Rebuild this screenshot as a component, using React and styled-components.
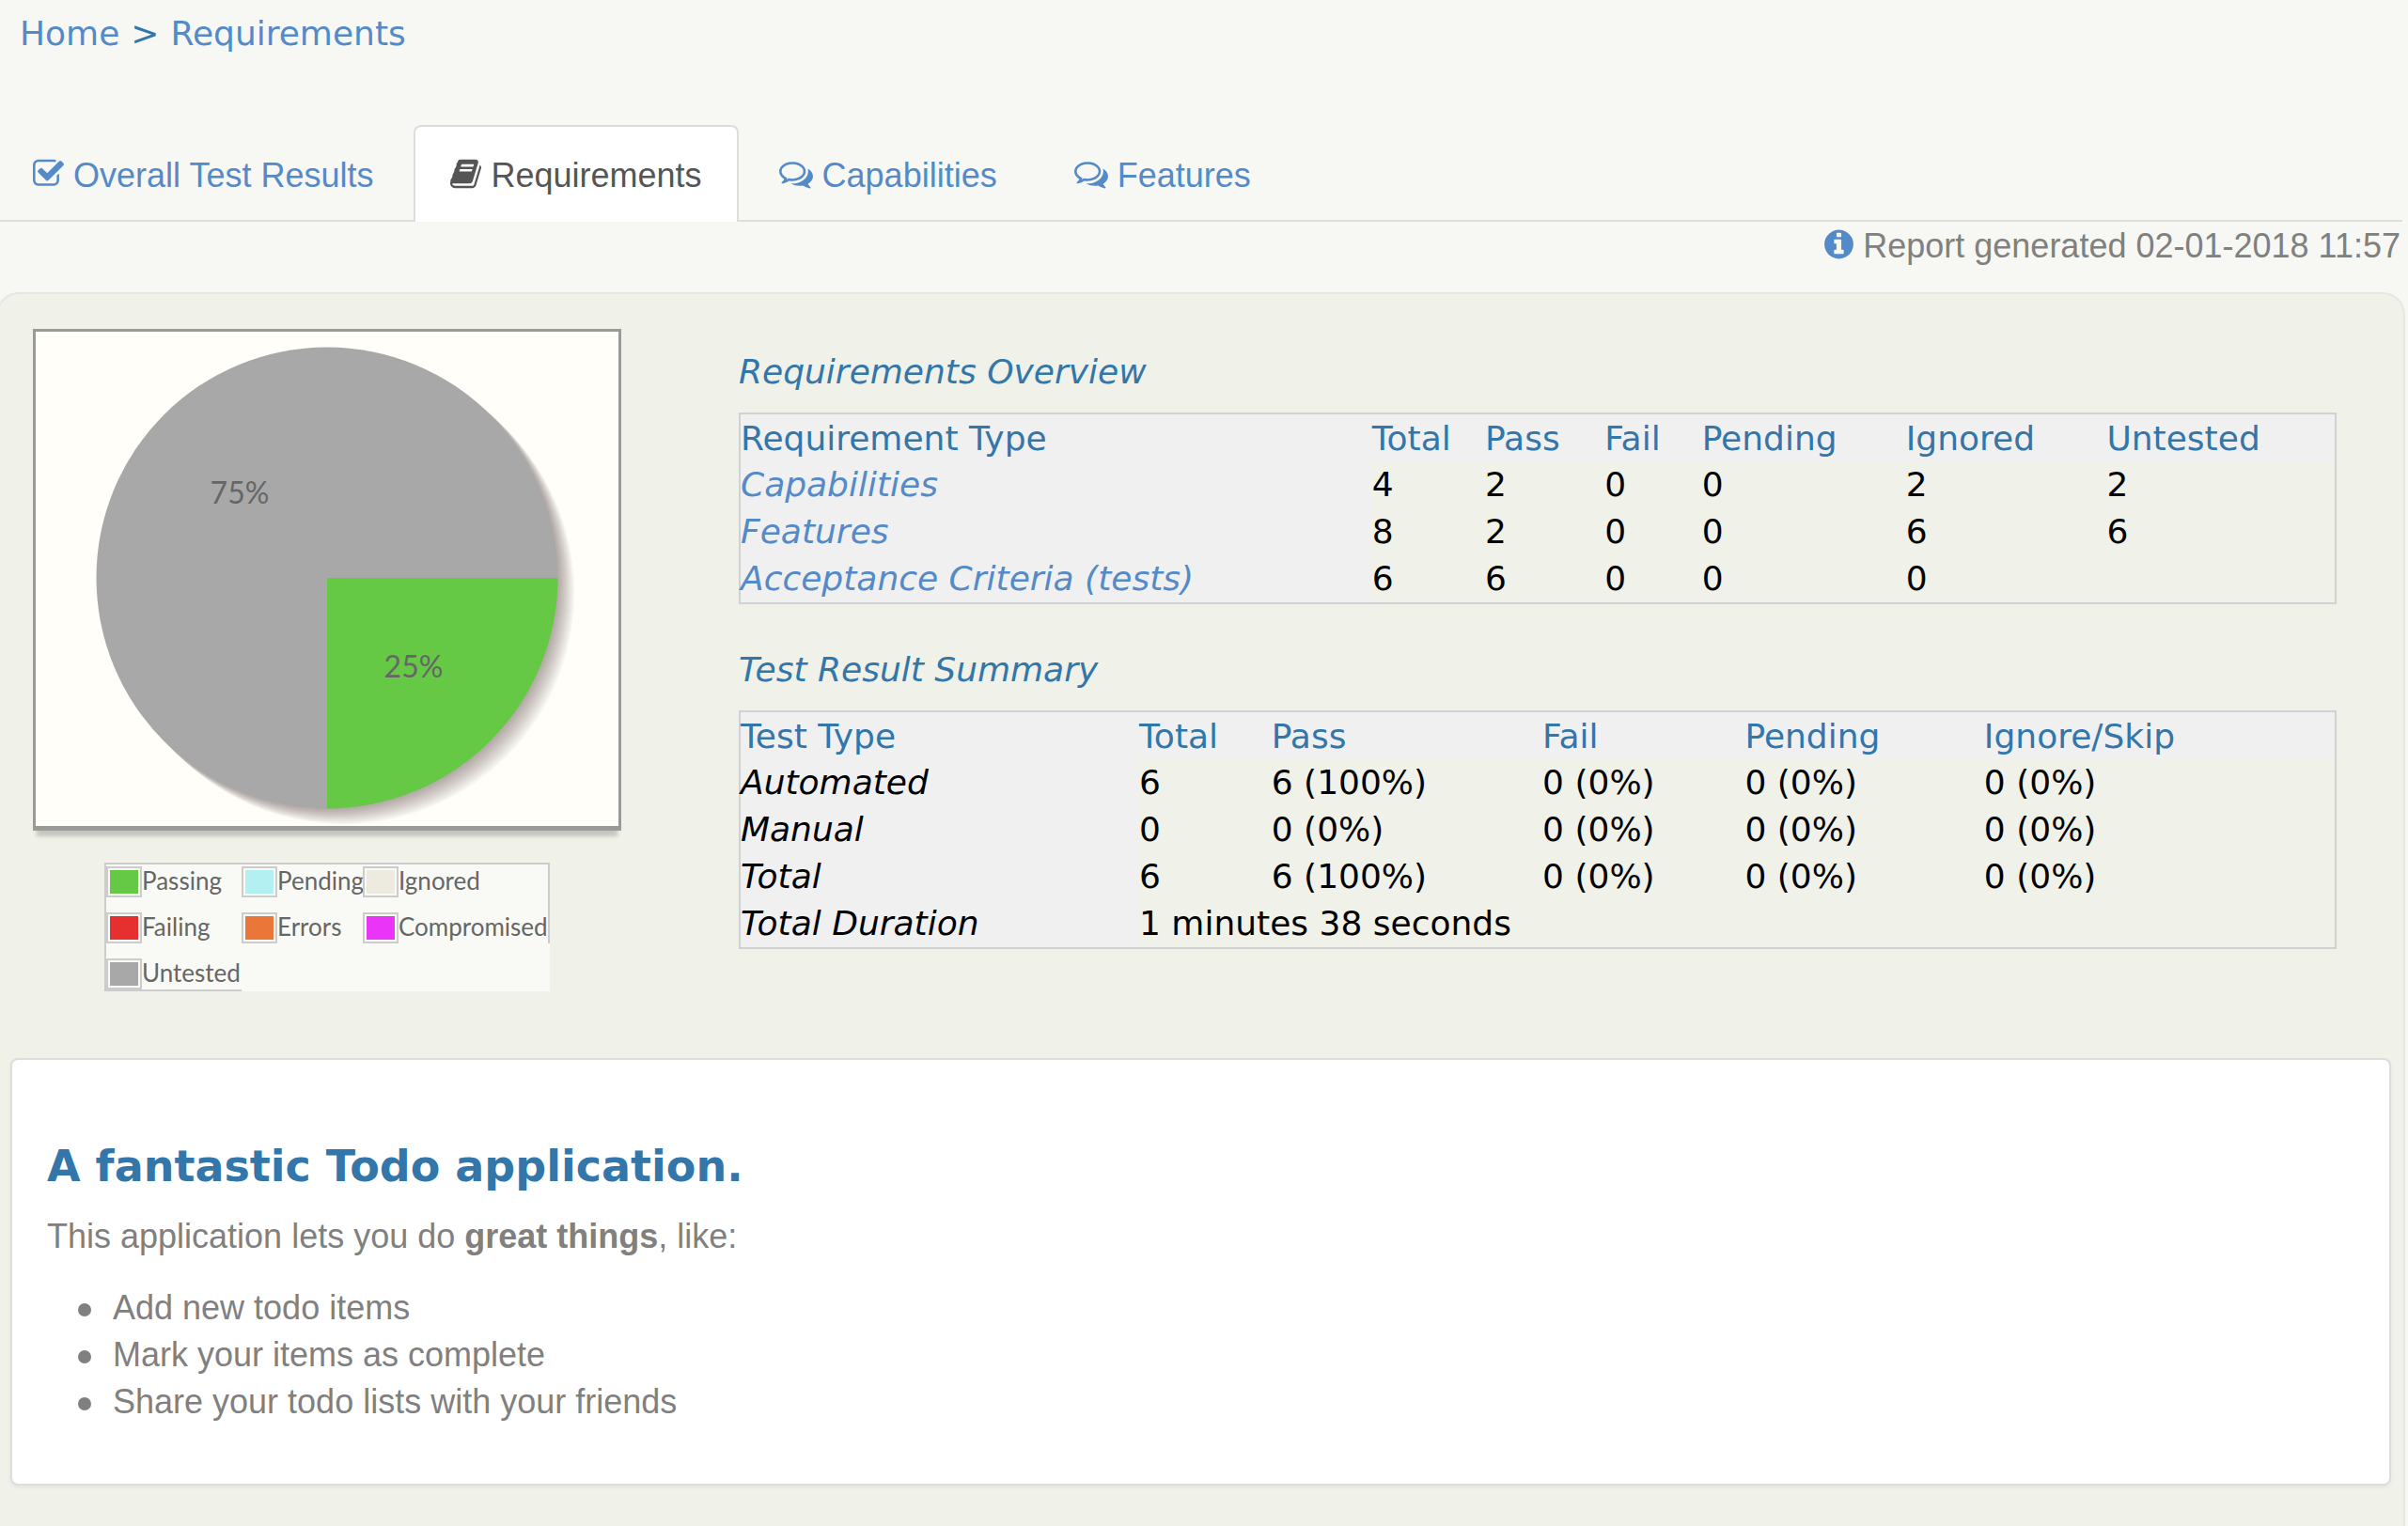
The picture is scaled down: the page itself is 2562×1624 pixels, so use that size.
import React from "react";
import styled, { createGlobalStyle } from "styled-components";

const sans = '"Liberation Sans", Arial, Helvetica, sans-serif';
const verdana = 'Verdana, "DejaVu Sans", sans-serif';
const trebuchet = '"Trebuchet MS", Lato, sans-serif';

const link = "#548ac8";
const heading = "#3276aa";

const GlobalStyle = createGlobalStyle`
  * { box-sizing: border-box; }
  body {
    margin: 0;
    background: #f7f8f3;
    color: #808080;
    font: 36px/51px ${sans};
  }
  a { color: ${link}; text-decoration: none; }
`;

const Page = styled.div`
  display: flex;
  flex-direction: column;
  min-height: 100vh;
  overflow: hidden;
`;

const Breadcrumbs = styled.nav`
  display: flex;
  gap: 12px;
  padding: 10px 21px 72px;
  font-family: ${verdana};
  color: ${heading};
`;

const TabList = styled.ul`
  display: flex;
  gap: 4px;
  margin: 0 6px 0 -4px;
  padding: 0;
  list-style: none;
  border-bottom: 2px solid #dcdddd;
`;

const Tab = styled.a`
  display: flex;
  gap: 10px;
  height: 103px;
  margin-bottom: -2px;
  padding: 26px 37px 24px;
  border: 2px solid ${(p) => (p.$active ? "#dcdddd" : "transparent")};
  border-bottom: 0;
  border-radius: 8px 8px 0 0;
  background: ${(p) => (p.$active ? "#fff" : "transparent")};
  color: ${(p) => (p.$active ? "#555" : link)};
`;

const Icon = styled.svg`
  flex: none;
  height: 36px;
  margin-top: 6px;
  fill: currentColor;
`;

const Generated = styled.div`
  display: flex;
  justify-content: flex-end;
  gap: 10px;
  padding: 0 8px 24px;

  svg { color: ${link}; }
`;

const Panel = styled.main`
  flex: 1;
  margin: 0 3px 0 -4px;
  padding: 0 13px 40px;
  border: 2px solid #e6e7e1;
  border-bottom: 0;
  border-radius: 24px 24px 0 0;
  background: #f0f1e8;
`;

const Summary = styled.section`
  display: flex;
  gap: 125px;
  padding: 37px 58px 71px 24px;
`;

const ChartColumn = styled.div`
  display: flex;
  flex: none;
  flex-direction: column;
  align-items: center;
  gap: 34px;
  width: 626px;
`;

const ChartFrame = styled.div`
  width: 100%;
  border: 3px solid #999b96;
  border-bottom-width: 5px;
  background: #fffef9;
  box-shadow: 0 10px 4px -4px rgba(0, 0, 0, 0.18);

  svg { display: block; width: 100%; }
  text {
    fill: #666;
    font: 32px ${trebuchet};
    text-anchor: middle;
  }
`;

const Legend = styled.ul`
  display: grid;
  grid-template-columns: 146px 129px 199px;
  margin: 0;
  padding: 0;
  list-style: none;
  background: #f9faf5;
  color: #666;
  font: 26px/31px ${trebuchet};
`;

const LegendItem = styled.li`
  display: flex;
  padding-top: ${(p) => (p.$top ? 2 : 16)}px;
  border: 0 solid #ccc;
  border-top-width: ${(p) => (p.$top ? 2 : 0)}px;
  border-left-width: ${(p) => (p.$left ? 2 : 0)}px;
  border-right-width: ${(p) => (p.$right ? 2 : 0)}px;
  border-bottom-width: ${(p) => (p.$bottom ? 2 : 0)}px;
`;

const Swatch = styled.span`
  flex: none;
  width: 38px;
  height: 33px;
  padding: 2px;
  border: 2px solid #ccc;
  background: ${(p) => p.$color} content-box;
`;

const Reports = styled.div`
  flex: 1;
  padding-top: 20px;
  font-family: ${verdana};
`;

const ReportTitle = styled.h4`
  margin: 0 0 18px;
  color: ${heading};
  font-weight: 400;
  font-style: italic;
`;

const ReportTable = styled.table`
  width: 100%;
  margin-bottom: 44px;
  border: 2px solid #d0d1d1;
  border-spacing: 0;
  table-layout: fixed;
  color: #000;
  line-height: 50px;
  text-align: left;

  &:last-child { margin-bottom: 0; }
  th, td { padding: 0; font-weight: 400; white-space: nowrap; }
  th { background: #f0f0f0; }
  thead th { padding-top: 2px; color: ${heading}; line-height: 48px; }
  tbody th { font-style: italic; }
`;

const Card = styled.article`
  padding: 81px 37px 62px;
  border: 2px solid #dcdddd;
  border-radius: 8px;
  background: #fff;
  box-shadow: 0 2px 4px rgba(0, 0, 0, 0.05);
`;

const CardTitle = styled.h2`
  margin: 0;
  color: ${heading};
  font: bold 46px/64px ${verdana};
`;

const Intro = styled.p`
  margin: 17px 0 26px;
`;

const Bullets = styled.ul`
  margin: 0;
  padding: 0 0 0 33px;
  list-style: none;
  line-height: 50px;
`;

const Bullet = styled.li`
  display: flex;
  align-items: center;
  gap: 23px;

  &::before {
    content: "";
    width: 14px;
    height: 14px;
    margin-top: 4px;
    border-radius: 50%;
    background: currentColor;
  }
`;

const icons = {
  check: {
    box: "64 0 1664 1792",
    width: 33,
    d: "M1472 930v318q0 119-84.5 203.5t-203.5 84.5h-832q-119 0-203.5-84.5t-84.5-203.5v-832q0-119 84.5-203.5t203.5-84.5h832q63 0 117 25 15 7 18 23 3 17-9 29l-49 49q-10 10-23 10-3 0-9-2-23-6-45-6h-832q-66 0-113 47t-47 113v832q0 66 47 113t113 47h832q66 0 113-47t47-113v-254q0-13 9-22l64-64q10-10 23-10 6 0 12 3 20 8 20 29zm231-489l-814 814q-24 24-57 24t-57-24l-430-430q-24-24-24-57t24-57l110-110q24-24 57-24t57 24l263 263 647-647q24-24 57-24t57 24l110 110q24 24 24 57t-24 57z",
  },
  book: {
    box: "64 0 1664 1792",
    width: 33,
    d: "M1703 478q40 57 18 129l-275 906q-19 64-76.5 107.5t-122.5 43.5h-923q-77 0-148.5-53.5t-99.5-131.5q-24-67-2-127 0-4 3-27t4-37q1-8-3-21.5t-3-19.5q2-11 8-21t16.5-23.5 16.5-23.5q23-38 45-91.5t30-91.5q3-10 .5-30t-.5-28q3-11 17-28t17-23q21-36 42-92t25-90q1-9-2.5-32t.5-28q4-13 22-30.5t22-22.5q19-26 42.5-84.5t27.5-96.5q1-8-3-25.5t-2-26.5q2-8 9-18t18-23 17-21q8-12 16.5-30.5t15-35 16-36 19.5-32 26.5-23.5 36-11.5 47.5 5.5l-1 3q38-9 51-9h761q74 0 114 56t18 130l-274 906q-36 119-71.5 153.5t-128.5 34.5h-869q-27 0-38 15-11 16-1 43 24 70 144 70h923q29 0 56-15.5t35-41.5l300-987q7-22 5-57 38 15 59 43zm-1064 2q-4 13 2 22.5t20 9.5h608q13 0 25.5-9.5t16.5-22.5l21-64q4-13-2-22.5t-20-9.5h-608q-13 0-25.5 9.5t-16.5 22.5zm-83 256q-4 13 2 22.5t20 9.5h608q13 0 25.5-9.5t16.5-22.5l21-64q4-13-2-22.5t-20-9.5h-608q-13 0-25.5 9.5t-16.5 22.5z",
  },
  comments: {
    box: "0 0 1792 1792",
    width: 36,
    d: "M704 384q-153 0-286 52t-211.5 141-78.5 191q0 82 53 158t149 132l97 56-35 84q34-20 62-39l44-31 53 10q78 14 153 14 153 0 286-52t211.5-141 78.5-191-78.5-191-211.5-141-286-52zm0-128q191 0 353.5 68.5t256.5 186.5 94 257-94 257-256.5 186.5-353.5 68.5q-86 0-176-16-124 88-278 128-36 9-86 16h-3q-11 0-20.5-8t-11.5-21q-1-3-1-6.5t.5-6.5 2-6l2.5-5 3.5-5.5 4-5 4.5-5 4-4.5q5-6 23-25t26-29.5 22.5-29 25-38.5 20.5-44q-124-72-195-177t-71-224q0-139 94-257t256.5-186.5 353.5-68.5zm822 1169q10 24 20.5 44t25 38.5 22.5 29 26 29.5 23 25q1 1 4 4.5t4.5 5 4 5 3.5 5.5l2.5 5 2 6 .5 6.5-1 6.5q-3 14-13 22t-22 7q-50-7-86-16-154-40-278-128-90 16-176 16-271 0-472-132 58 4 88 4 161 0 309-45t264-129q125-92 192-212t67-254q0-77-23-152 129 71 204 178t75 230q0 120-71 224.5t-195 176.5z",
  },
  info: {
    box: "128 0 1536 1792",
    width: 31,
    d: "M1152 1376v-160q0-14-9-23t-23-9h-96v-512q0-14-9-23t-23-9h-320q-14 0-23 9t-9 23v160q0 14 9 23t23 9h96v320h-96q-14 0-23 9t-9 23v160q0 14 9 23t23 9h448q14 0 23-9t9-23zm-128-896v-160q0-14-9-23t-23-9h-192q-14 0-23 9t-9 23v160q0 14 9 23t23 9h192q14 0 23-9t9-23zm640 416q0 209-103 385.5t-279.5 279.5-385.5 103-385.5-103-279.5-279.5-103-385.5 103-385.5 279.5-279.5 385.5-103 385.5 103 279.5 279.5 103 385.5z",
  },
};

function Glyph({ name }) {
  const { box, width, d } = icons[name];
  return (
    <Icon viewBox={box} width={width} aria-hidden="true">
      <path d={d} />
    </Icon>
  );
}

const tabs = [
  { label: "Overall Test Results", icon: "check" },
  { label: "Requirements", icon: "book", active: true },
  { label: "Capabilities", icon: "comments" },
  { label: "Features", icon: "comments" },
];

const legend = [
  { label: "Passing", color: "#66c945", top: true, left: true },
  { label: "Pending", color: "#b3f0f1", top: true },
  { label: "Ignored", color: "#edebdf", top: true, right: true },
  { label: "Failing", color: "#e5302f", left: true },
  { label: "Errors", color: "#ea7639" },
  { label: "Compromised", color: "#ea34f7", right: true },
  { label: "Untested", color: "#a8a8a8", left: true, bottom: true },
];

const overview = {
  widths: ["39.6%", "7.1%", "7.5%", "6.1%", "12.8%", "12.6%", "14.3%"],
  head: ["Requirement Type", "Total", "Pass", "Fail", "Pending", "Ignored", "Untested"],
  rows: [
    ["Capabilities", "4", "2", "0", "0", "2", "2"],
    ["Features", "8", "2", "0", "0", "6", "6"],
    ["Acceptance Criteria (tests)", "6", "6", "0", "0", "0", ""],
  ],
};

const results = {
  widths: ["25%", "8.3%", "17%", "12.7%", "15%", "22%"],
  head: ["Test Type", "Total", "Pass", "Fail", "Pending", "Ignore/Skip"],
  rows: [
    ["Automated", "6", "6 (100%)", "0 (0%)", "0 (0%)", "0 (0%)"],
    ["Manual", "0", "0 (0%)", "0 (0%)", "0 (0%)", "0 (0%)"],
    ["Total", "6", "6 (100%)", "0 (0%)", "0 (0%)", "0 (0%)"],
    ["Total Duration", "1 minutes 38 seconds"],
  ],
};

function DataTable({ data, linked }) {
  return (
    <ReportTable>
      <colgroup>
        {data.widths.map((width, i) => (
          <col key={i} style={{ width }} />
        ))}
      </colgroup>
      <thead>
        <tr>
          {data.head.map((title) => (
            <th key={title} scope="col">{title}</th>
          ))}
        </tr>
      </thead>
      <tbody>
        {data.rows.map(([name, ...cells]) => (
          <tr key={name}>
            <th scope="row">{linked ? <a href="#">{name}</a> : name}</th>
            {cells.map((cell, i) => (
              <td key={i} colSpan={cells.length === 1 ? data.head.length - 1 : 1}>
                {cell}
              </td>
            ))}
          </tr>
        ))}
      </tbody>
    </ReportTable>
  );
}

const shadowSteps = [1, 2, 3, 4, 5, 6, 7, 8, 9, 10];

function PieChart() {
  return (
    <ChartFrame>
      <svg viewBox="0 0 620 526" role="img" aria-label="75% untested, 25% passing">
        {shadowSteps.map((step) => (
          <circle
            key={step}
            cx={310 + step * 1.7}
            cy={262 + step * 1.6}
            r="246"
            fill="#140c00"
            opacity="0.034"
          />
        ))}
        <circle cx="310" cy="262" r="245.5" fill="#a8a8a8" />
        <path d="M310 262H555.5A245.5 245.5 0 0 1 310 507.5Z" fill="#66c945" />
        <text x="217" y="183">75%</text>
        <text x="402" y="368">25%</text>
      </svg>
    </ChartFrame>
  );
}

export default function App() {
  return (
    <Page>
      <GlobalStyle />
      <Breadcrumbs aria-label="Breadcrumb">
        <a href="#">Home</a>
        <span>&gt;</span>
        <a href="#">Requirements</a>
      </Breadcrumbs>
      <TabList>
        {tabs.map((tab) => (
          <li key={tab.label}>
            <Tab href="#" $active={tab.active}>
              <Glyph name={tab.icon} />
              {tab.label}
            </Tab>
          </li>
        ))}
      </TabList>
      <Generated>
        <Glyph name="info" />
        Report generated 02-01-2018 11:57
      </Generated>
      <Panel>
        <Summary>
          <ChartColumn>
            <PieChart />
            <Legend>
              {legend.map((item) => (
                <LegendItem
                  key={item.label}
                  $top={item.top}
                  $left={item.left}
                  $right={item.right}
                  $bottom={item.bottom}
                >
                  <Swatch $color={item.color} />
                  {item.label}
                </LegendItem>
              ))}
            </Legend>
          </ChartColumn>
          <Reports>
            <ReportTitle>Requirements Overview</ReportTitle>
            <DataTable data={overview} linked />
            <ReportTitle>Test Result Summary</ReportTitle>
            <DataTable data={results} />
          </Reports>
        </Summary>
        <Card>
          <CardTitle>A fantastic Todo application.</CardTitle>
          <Intro>
            This application lets you do <strong>great things</strong>, like:
          </Intro>
          <Bullets>
            <Bullet>Add new todo items</Bullet>
            <Bullet>Mark your items as complete</Bullet>
            <Bullet>Share your todo lists with your friends</Bullet>
          </Bullets>
        </Card>
      </Panel>
    </Page>
  );
}
